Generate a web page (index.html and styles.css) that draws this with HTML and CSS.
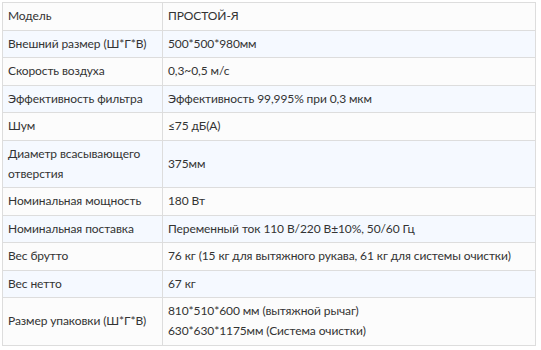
FILE: index.html
```html
<!DOCTYPE html>
<html lang="ru">
<head>
<meta charset="utf-8">
<link rel="stylesheet" href="styles.css">
</head>
<body>
<table class="spec">
  <colgroup><col class="spec-key"><col class="spec-val"></colgroup>
  <tbody>
    <tr><td>Модель</td><td>ПРОСТОЙ-Я</td></tr>
    <tr><td>Внешний размер (Ш*Г*В)</td><td>500*500*980мм</td></tr>
    <tr><td>Скорость воздуха</td><td>0,3~0,5 м/с</td></tr>
    <tr><td>Эффективность фильтра</td><td>Эффективность 99,995% при 0,3 мкм</td></tr>
    <tr><td>Шум</td><td>≤75 дБ(A)</td></tr>
    <tr><td>Диаметр всасывающего<br>отверстия</td><td>375мм</td></tr>
    <tr><td>Номинальная мощность</td><td>180 Вт</td></tr>
    <tr><td>Номинальная поставка</td><td>Переменный ток 110 В/220 В±10%, 50/60 Гц</td></tr>
    <tr><td>Вес брутто</td><td>76 кг (15 кг для вытяжного рукава, 61 кг для системы очистки)</td></tr>
    <tr><td>Вес нетто</td><td>67 кг</td></tr>
    <tr><td>Размер упаковки (Ш*Г*В)</td><td>810*510*600 мм (вытяжной рычаг)<br>630*630*1175мм (Система очистки)</td></tr>
  </tbody>
</table>
</body>
</html>
```
FILE: styles.css
```css
html, body {
  margin: 0;
  padding: 0;
  background: #ffffff;
}
body {
  padding: 2px 0 0 2px;
  font-family: Lato, "Liberation Sans", sans-serif;
  font-size: 12px;
  letter-spacing: -0.1px;
  color: #333333;
}
.spec {
  border-collapse: collapse;
  width: 534px;
  table-layout: fixed;
}
.spec-key {
  width: 160px;
}
.spec td {
  border: 1px solid #dddddd;
  padding: 3.25px 5px;
  line-height: 20px;
  vertical-align: middle;
  text-align: left;
  white-space: nowrap;
}
.spec tr:nth-child(odd) td {
  background: #fcfcfc;
}
.spec tr:nth-child(even) td {
  background: #f5f9ff;
}
```
